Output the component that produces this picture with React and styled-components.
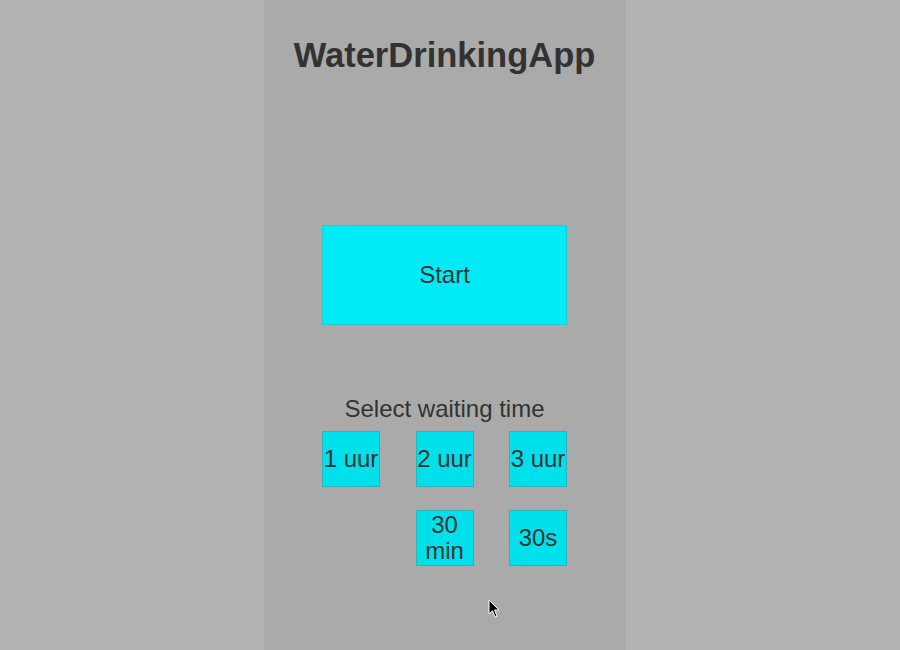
import React from 'react';
import styled, { createGlobalStyle } from 'styled-components';

const GlobalStyle = createGlobalStyle`
  html, body {
    margin: 0;
    padding: 0;
    background: #b4b4b4;
    font-family: "Liberation Sans", Arial, sans-serif;
  }
`;

const Page = styled.div`
  display: grid;
  grid-template-columns: 264px 362px 1fr;
  height: 650px;
  overflow: hidden;
`;

const Panel = styled.div`
  grid-column: 2;
  position: relative;
  background: #aaaaaa;
  display: flex;
  flex-direction: column;
  align-items: center;
  padding-top: 35px;
  padding-right: 1px;
  box-sizing: border-box;
  color: #323232;
`;

const Title = styled.h1`
  margin: 0;
  font-size: 34.5px;
  line-height: 40px;
  font-weight: bold;
`;

const StartButton = styled.button`
  margin-top: 150px;
  width: 245px;
  height: 100px;
  background: #00ebf5;
  border: 1px solid #22c9d2;
  color: #323232;
  font-family: inherit;
  font-size: 24px;
  padding: 0;
`;

const Label = styled.div`
  margin-top: 69px;
  font-size: 24px;
  line-height: 28px;
  padding-top: 1px;
`;

const TimeGrid = styled.div`
  margin-top: 8px;
  display: grid;
  grid-template-columns: repeat(3, 58px);
  grid-auto-rows: 56px;
  column-gap: 35.5px;
  row-gap: 23px;
`;

const TimeButton = styled.button`
  grid-column: ${p => p.$col || 'auto'};
  box-sizing: border-box;
  width: 58px;
  height: 56px;
  padding: 0;
  background: #00e0ea;
  border: 1px solid #2fb3bb;
  color: #323232;
  font-family: inherit;
  font-size: 24px;
  line-height: 26px;
  white-space: normal;
`;

const Cursor = styled.svg`
  position: absolute;
  left: 224px;
  top: 599px;
`;

export default function App() {
  return (
    <>
      <GlobalStyle />
      <Page>
        <Panel>
          <Title>WaterDrinkingApp</Title>
          <StartButton>Start</StartButton>
          <Label>Select waiting time</Label>
          <TimeGrid>
            <TimeButton>1 uur</TimeButton>
            <TimeButton>2 uur</TimeButton>
            <TimeButton>3 uur</TimeButton>
            <TimeButton $col={2}>30 min</TimeButton>
            <TimeButton>30s</TimeButton>
          </TimeGrid>
          <Cursor width="14" height="22" viewBox="0 0 14 22">
            <path d="M1 1 L1 15 L4.5 11.8 L7 18 L9 17.2 L6.6 11 L11 11 Z" fill="#000" stroke="#fff" strokeWidth="1" />
          </Cursor>
        </Panel>
      </Page>
    </>
  );
}
